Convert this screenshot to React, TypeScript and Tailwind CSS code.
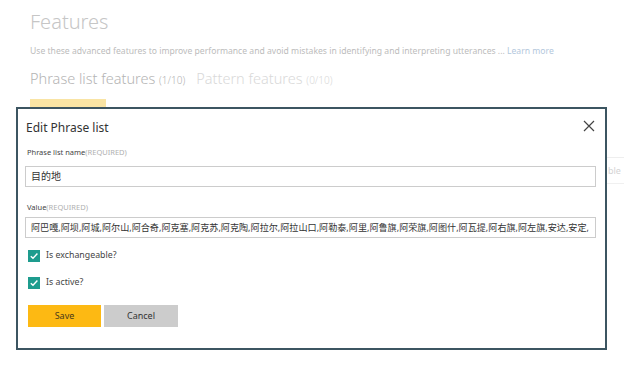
import React from "react";

const font = { fontFamily: '"Noto Sans", "Noto Sans CJK SC", sans-serif' };

function Check() {
  return (
    <div className="w-[12px] h-[12px] bg-[#1e9c8e] flex items-center justify-center">
      <svg width="10" height="10" viewBox="0 0 10 10">
        <path d="M1.8 5.2 L4 7.3 L8.4 2.6" fill="none" stroke="#ffffff" strokeWidth="1.4" />
      </svg>
    </div>
  );
}

export default function App() {
  const value =
    "阿巴嘎,阿坝,阿城,阿尔山,阿合奇,阿克塞,阿克苏,阿克陶,阿拉尔,阿拉山口,阿勒泰,阿里,阿鲁旗,阿荣旗,阿图什,阿瓦提,阿右旗,阿左旗,安达,安定,";
  return (
    <div className="relative w-[624px] h-[370px] bg-white overflow-hidden" style={font}>
      {/* background page */}
      <div className="pl-[30px] pt-[7px]">
        <div className="text-[20px] leading-[30px] font-light text-[#c6c6c6]">Features</div>
        <div className="mt-[8px] text-[8.6px] leading-[12px] text-[#bcbcbc] whitespace-nowrap">
          Use these advanced features to improve performance and avoid mistakes in identifying and interpreting utterances ...{" "}
          <span className="text-[#b3c7dc]">Learn more</span>
        </div>
        <div className="mt-[11px] flex items-baseline gap-[11px] whitespace-nowrap font-light">
          <div className="text-[#b4b4b4] text-[14.5px] leading-[20px]">
            Phrase list features <span className="text-[10px]">(1/10)</span>
          </div>
          <div className="text-[#d9d9d9] text-[14.5px] leading-[20px]">
            Pattern features <span className="text-[10px]">(0/10)</span>
          </div>
        </div>
        <div className="mt-[9px] w-[76px] h-[14px] bg-[#f9e4a4]" />
      </div>
      <div className="absolute left-[600px] top-[157px] w-[24px] h-px bg-[#eeeeee]" />
      <div className="absolute left-[608px] top-[164px] text-[9px] text-[#d4d4d4]">ble</div>
      <div className="absolute left-[600px] top-[183px] w-[24px] h-px bg-[#f0f0f0]" />

      {/* modal */}
      <div className="absolute left-[16px] top-[107px] w-[591px] h-[243px] bg-white border-2 border-[#3c5561] pl-[7px] pr-[9px]">
        <div className="mt-[11px] ml-[1px] text-[12px] leading-[16px] text-[#333333]">Edit Phrase list</div>
        <button className="absolute right-[9px] top-[10px] w-[14px] h-[14px] flex items-center justify-center">
          <svg width="12" height="12" viewBox="0 0 12 12">
            <path d="M1 1 L11 11 M11 1 L1 11" stroke="#444444" strokeWidth="1.2" fill="none" />
          </svg>
        </button>
        <div className="mt-[11px] ml-[2px] text-[7.5px] leading-[10px] text-[#444444]">
          Phrase list name<span className="text-[#b0b0b0]">(REQUIRED)</span>
        </div>
        <div className="mt-[9px] h-[21px] border border-[#cccccc] flex items-center pl-[5px] text-[10px] text-[#333333]">
          目的地
        </div>
        <div className="mt-[15px] ml-[2px] text-[7.5px] leading-[10px] text-[#444444]">
          Value<span className="text-[#b0b0b0]">(REQUIRED)</span>
        </div>
        <div className="mt-[5px] h-[21px] border border-[#cccccc] flex items-center pl-[5px] text-[9.1px] text-[#333333] whitespace-nowrap">
          {value}
        </div>
        <div className="mt-[12px] ml-[3px] flex items-center gap-[6px] h-[12px]">
          <Check />
          <span className="text-[8.8px] text-[#444444]">Is exchangeable?</span>
        </div>
        <div className="mt-[15px] ml-[3px] flex items-center gap-[6px] h-[12px]">
          <Check />
          <span className="text-[8.8px] text-[#444444]">Is active?</span>
        </div>
        <div className="mt-[16px] ml-[3px] flex gap-[3px]">
          <button className="w-[73px] h-[22px] bg-[#fdb913] text-[9px] text-[#4a3a1a]">Save</button>
          <button className="w-[74px] h-[22px] bg-[#cccccc] text-[9px] text-[#333333]">Cancel</button>
        </div>
      </div>
    </div>
  );
}
